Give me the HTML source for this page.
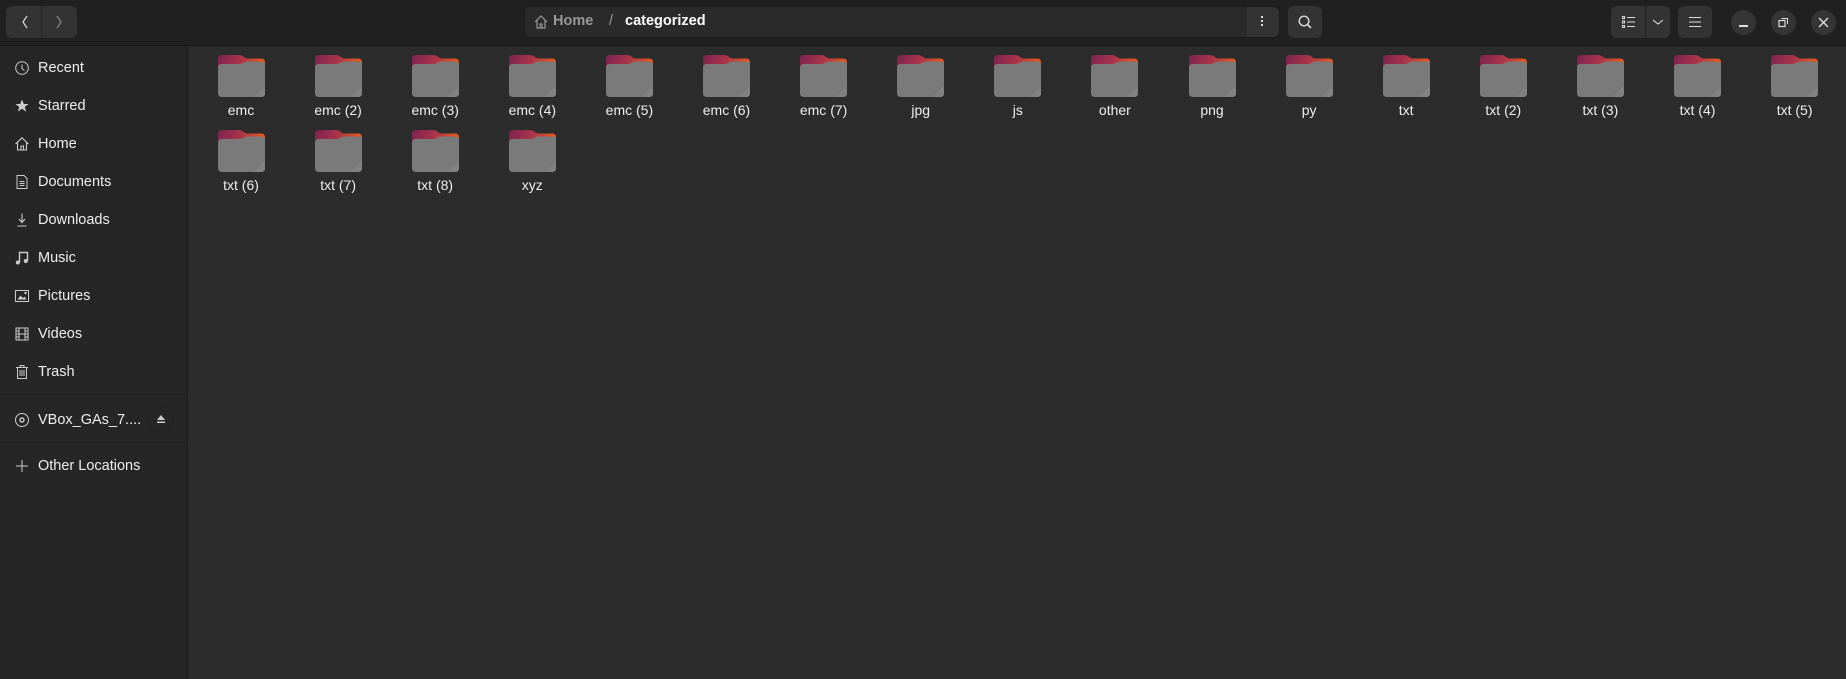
<!DOCTYPE html>
<html><head><meta charset="utf-8"><style>
*{margin:0;padding:0;box-sizing:border-box}
body{width:1846px;height:679px;background:#2c2c2c;font-family:"Liberation Sans","DejaVu Sans",sans-serif;color:#eee;overflow:hidden;position:relative;font-size:14px}
.hdr{position:absolute;left:0;top:0;width:1846px;height:46px;background:#202020;border-bottom:1px solid #151515}
.btn{position:absolute;background:#333;border-radius:6px;top:6px;height:32px}
.side{position:absolute;left:0;top:46px;width:188px;height:633px;background:#262626;border-right:1px solid #1b1b1b}
.si{position:absolute;left:0;width:187px;height:38px}
.si svg{position:absolute;left:14px;top:12px}
.si span{position:absolute;left:38px;top:12px;font-size:14.5px;line-height:17px;color:#eee}
.sep{position:absolute;left:0;width:187px;height:1px;background:#1e1e1e}
.f{position:absolute;width:97px;text-align:center}
.f .lab{position:absolute;top:47px;left:0;width:97px;font-size:14px;color:#eee}
.circ{position:absolute;top:10px;width:25px;height:25px;border-radius:50%;background:#353535}
</style></head><body>
<div class="hdr">
 <div class="btn" style="left:6px;width:71px"><div style="position:absolute;left:35px;top:0;width:1px;height:32px;background:#252525"></div>
  <svg style="position:absolute;left:14px;top:9px" width="10" height="14"><path d="M7 1 L3 7 L7 13" stroke="#ddd" fill="none" stroke-width="1.2"/></svg>
  <svg style="position:absolute;left:48px;top:9px" width="10" height="14"><path d="M3 1 L7 7 L3 13" stroke="#888" fill="none" stroke-width="1.2"/></svg></div>
 <div class="btn" style="left:524px;width:756px;background:#2a2a2a;border:1px solid #1c1c1c">
  <svg style="position:absolute;left:8px;top:7px" width="16" height="16"><path d="M2 8 L8 2 L14 8 M4 6 V14 H12 V6 M7 14 V10 H9 V14" stroke="#999" fill="none" stroke-width="1.2"/></svg>
  <span style="position:absolute;left:28px;top:6px;font-weight:bold;color:#999;font-size:14.5px">Home</span>
  <span style="position:absolute;left:84px;top:6px;color:#999;font-size:14.5px">/</span>
  <span style="position:absolute;left:100px;top:6px;font-weight:bold;color:#fff;font-size:14.5px">categorized</span>
  <div style="position:absolute;left:720px;top:0;width:34px;height:30px;background:#333;border-radius:0 6px 6px 0;border-left:1px solid #232323">
   <div style="position:absolute;left:15px;top:9px;width:2px;height:2px;background:#ddd;box-shadow:0 4px #ddd,0 8px #ddd"></div></div>
 </div>
 <div class="btn" style="left:1288px;width:34px"><svg style="position:absolute;left:9px;top:8px" width="16" height="16"><circle cx="7" cy="7" r="4.8" stroke="#ddd" fill="none" stroke-width="1.4"/><path d="M10.5 10.5 L14 14" stroke="#ddd" stroke-width="1.6"/></svg></div>
 <div class="btn" style="left:1611px;width:59px"><div style="position:absolute;left:34px;top:0;width:1px;height:32px;background:#222"></div>
  <svg style="position:absolute;left:10px;top:9px" width="16" height="14"><g stroke="#ddd" fill="none" stroke-width="1"><rect x="1.5" y="1.5" width="2" height="2"/><rect x="1.5" y="6" width="2" height="2"/><rect x="1.5" y="10.5" width="2" height="2"/><path d="M6 2.5H14M6 7H14M6 11.5H14"/></g></svg>
  <svg style="position:absolute;left:41px;top:12px" width="12" height="8"><path d="M1 2 L6 6 L11 2" stroke="#ddd" fill="none" stroke-width="1.1"/></svg></div>
 <div class="btn" style="left:1678px;width:34px"><svg style="position:absolute;left:11px;top:10px" width="12" height="12"><path d="M0 1.5H12M0 6H12M0 10.5H12" stroke="#ddd" stroke-width="1.1"/></svg></div>
 <div class="circ" style="left:1731px"><div style="position:absolute;left:8px;top:15px;width:9px;height:1.5px;background:#ddd"></div></div>
 <div class="circ" style="left:1771px"><svg style="position:absolute;left:7px;top:7px" width="11" height="11"><rect x="1" y="3.5" width="6" height="6" stroke="#ddd" fill="none" stroke-width="1.2"/><path d="M3.5 1.5H9.5V7" stroke="#ddd" fill="none" stroke-width="1"/></svg></div>
 <div class="circ" style="left:1811px"><svg style="position:absolute;left:7px;top:7px" width="11" height="11"><path d="M1 1L10 10M10 1L1 10" stroke="#ddd" stroke-width="1.4"/></svg></div>
</div>
<div class="side">
 <div class="si" style="top:2px"><svg width="16" height="16"><circle cx="8" cy="8" r="6.3" stroke="#ccc" fill="none"/><path d="M8 4.5V8.5L10.5 10.5" stroke="#ccc" fill="none"/></svg><span>Recent</span></div>
 <div class="si" style="top:40px"><svg width="16" height="16"><path d="M8 1.5L9.9 6H14.6L10.8 8.9L12.2 13.6L8 10.8L3.8 13.6L5.2 8.9L1.4 6H6.1Z" fill="#ccc"/></svg><span>Starred</span></div>
 <div class="si" style="top:78px"><svg width="16" height="16"><path d="M1.5 8 L8 1.8 L14.5 8 M3.5 6.3 V14 H12.5 V6.3 M7 14 V10 H9.5 V14" stroke="#ccc" fill="none" stroke-width="1.1"/></svg><span>Home</span></div>
 <div class="si" style="top:116px"><svg width="16" height="16"><path d="M3 1.5H10L13 4.5V14.5H3Z M5.5 7.5H10.5M5.5 9.5H10.5M5.5 11.5H10.5" stroke="#ccc" fill="none"/></svg><span>Documents</span></div>
 <div class="si" style="top:154px"><svg width="16" height="16"><path d="M8 1.5V10M5 7L8 10.5L11 7M3.5 14H12.5" stroke="#ccc" fill="none" stroke-width="1.1"/></svg><span>Downloads</span></div>
 <div class="si" style="top:192px"><svg width="16" height="16"><path d="M5.5 12.5V2.5H13.5V11" stroke="#ccc" fill="none" stroke-width="1.4"/><circle cx="3.8" cy="12.5" r="2" fill="#ccc"/><circle cx="11.8" cy="11" r="2" fill="#ccc"/></svg><span>Music</span></div>
 <div class="si" style="top:230px"><svg width="16" height="16"><rect x="1.5" y="2.5" width="13" height="11" stroke="#ccc" fill="none"/><path d="M3.5 11.5L6.5 7.5L9 10L10.5 8.5L12.5 11.5Z" fill="#ccc"/><circle cx="11.5" cy="5" r="1.2" fill="#ccc"/></svg><span>Pictures</span></div>
 <div class="si" style="top:268px"><svg width="16" height="16"><rect x="2" y="2" width="12" height="12" stroke="#ccc" fill="none"/><path d="M5 2V14M11 2V14M2 8H14M2 5H5M2 11H5M11 5H14M11 11H14" stroke="#ccc"/></svg><span>Videos</span></div>
 <div class="si" style="top:306px"><svg width="16" height="16"><path d="M2 3.5H14M6 3.5V1.5H10V3.5M3.5 3.5V14.5H12.5V3.5M6 6V12M8 6V12M10 6V12" stroke="#ccc" fill="none"/></svg><span>Trash</span></div>
 <div class="sep" style="top:348px"></div>
 <div class="si" style="top:354px"><svg width="16" height="16"><circle cx="8" cy="8" r="6.5" stroke="#ccc" fill="none"/><circle cx="8" cy="8" r="2" stroke="#ccc" fill="none" stroke-width="1.4"/></svg><span>VBox_GAs_7....</span>
  <div style="position:absolute;left:147px;top:5px;width:27px;height:27px;border-radius:50%;border:1px solid #222"><svg style="position:absolute;left:7px;top:7px" width="12" height="12"><path d="M6 2L10 7H2Z M2 8.5H10V10H2Z" fill="#ccc"/></svg></div></div>
 <div class="sep" style="top:396px"></div>
 <div class="si" style="top:400px"><svg width="16" height="16"><path d="M8 2V14M2 8H14" stroke="#ccc" stroke-width="1"/></svg><span>Other Locations</span></div>
</div>
<svg width="0" height="0" style="position:absolute"><defs>
<linearGradient id="g" x1="0" x2="1" y1="0" y2="0.2"><stop offset="0" stop-color="#7a2350"/><stop offset="0.5" stop-color="#a8344a"/><stop offset="1" stop-color="#ea5a1e"/></linearGradient></defs></svg>
<div id="grid"></div>
<script>
var names=["emc","emc (2)","emc (3)","emc (4)","emc (5)","emc (6)","emc (7)","jpg","js","other","png","py","txt","txt (2)","txt (3)","txt (4)","txt (5)","txt (6)","txt (7)","txt (8)","xyz"];
var h="";
names.forEach(function(n,i){var c=i%17,r=Math.floor(i/17);var x=192.5+c*97.1,y=55+r*75;
h+='<div class="f" style="left:'+x+'px;top:'+y+'px;height:70px"><svg style="position:absolute;left:25px;top:0" width="47" height="43"><path d="M4 0H21Q24 0 26 2Q27.5 3.5 30 3.5H43Q47 3.5 47 7.5V20H0V4Q0 0 4 0Z" fill="url(#g)"/><path d="M4 9H21Q24 9 26 7.5Q27.5 6.5 30 6.5H44Q47 6.5 47 9.5V38Q47 42 43 42H4Q0 42 0 38V13Q0 9 4 9Z" fill="#7a7a7a"/><path d="M36 42L47 31V38Q47 42 43 42Z" fill="#828282"/></svg><div class="lab">'+n+'</div></div>';});
document.getElementById("grid").innerHTML=h;
</script>
</body></html>
